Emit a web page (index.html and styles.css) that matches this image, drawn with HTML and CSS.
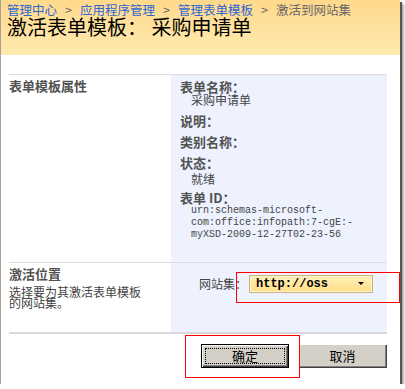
FILE: index.html
```html
<!doctype html>
<html>
<head>
<meta charset="utf-8">
<title>激活表单模板</title>
<link rel="stylesheet" href="styles.css">
</head>

<body>
<div class="page">
	<div class="header">
		<div class="crumbs">
			<a href="#">管理中心</a><span class="sep">&gt;</span><a href="#">应用程序管理</a><span class="sep">&gt;</span><a href="#">管理表单模板</a><span class="sep">&gt;</span><span class="cur">激活到网站集</span>
		</div>
		<h1>激活表单模板： 采购申请单</h1>
	</div>

	<div class="form">
		<div class="section">
			<div class="info">
				<h3>表单模板属性</h3>
			</div>
			<div class="body props">
				<div class="prop">
					<div class="label">表单名称：</div>
					<div class="value">采购申请单</div>
				</div>
				<div class="prop">
					<div class="label">说明：</div>
				</div>
				<div class="prop">
					<div class="label">类别名称：</div>
				</div>
				<div class="prop state">
					<div class="label">状态：</div>
					<div class="value">就绪</div>
				</div>
				<div class="prop">
					<div class="label">表单 ID：</div>
					<div class="value urn">urn:schemas-microsoft-<br>com:office:infopath:7-cgE:-<br>myXSD-2009-12-27T02-23-56</div>
				</div>
			</div>
		</div>

		<div class="section">
			<div class="info">
				<h3>激活位置</h3>
				<p>选择要为其激活表单模板的网站集。</p>
			</div>
			<div class="body site">
				<span class="site-label">网站集：</span>
				<div class="site-select">http://oss<i class="arrow"></i></div>
			</div>
		</div>

		<div class="buttons">
			<button class="btn default"><span>确定</span></button>
			<button class="btn"><span>取消</span></button>
		</div>
	</div>

	<div class="mark mark-select"></div>
	<div class="mark mark-ok"></div>
</div>
</body>
</html>
```

FILE: styles.css
```css
*{ margin:0; padding:0; box-sizing:border-box; }
body{ background:#fff; font-family:"Noto Sans CJK SC", "Liberation Sans", sans-serif; font-size:12px; color:#444; }
.page{ position:relative; width:400px; height:384px; background:#fff; border-left:1px solid #a8a098; box-shadow:2px 2px 0 #555, 4px 4px 2px #aaa; }

.header{ height:55px; padding:3px 0 0 6px; background:linear-gradient(#ffd98c, #ffeab0); }
.crumbs{ font-size:12.5px; line-height:14px; color:#666; white-space:nowrap; }
.crumbs a{ color:#2f66d0; text-decoration:none; }
.crumbs .sep{ padding:0 8px; }
.crumbs .cur{ color:#666; }
h1{ margin-top:-1px; font-size:20px; line-height:22px; font-weight:normal; color:#000; white-space:nowrap; }

.form{ margin:19px 0 0 8px; width:378px; }
.section{ display:flex; border-top:1px solid #dcdcdc; }
.info{ width:162px; padding-top:4px; }
.info h3{ font-size:13px; line-height:13px; font-weight:bold; color:#525252; }
.info p{ width:138px; margin-top:6px; font-size:12px; line-height:11px; color:#444; }
.body{ flex:1; background:#eef2ff; }

.props{ height:187px; padding:5px 0 0 9px; }
.prop{ margin-bottom:8px; }
.prop.state{ margin-top:1px; margin-bottom:6px; }
.label{ font-size:13px; line-height:13px; font-weight:bold; color:#525252; }
.value{ padding-left:11px; font-size:12px; line-height:13px; color:#444; }
.state .value{ margin-top:3px; }
.value.urn{ margin-top:1px; font-family:"Liberation Mono", monospace; font-size:10px; line-height:12px; color:#444; }

.site{ display:flex; align-items:center; height:69px; padding:0 0 28px 28px; }
.site-label{ width:50px; font-size:12px; color:#444; }
.site-select{ position:relative; width:124px; height:18px; padding-left:6px; border:1px solid #cbb27e; box-shadow:inset 0 0 0 1px #fff3cc; background:linear-gradient(#ffefb8, #ffdf88); font-family:"Liberation Mono", monospace; font-size:12px; font-weight:bold; line-height:16px; color:#000; }
.arrow{ position:absolute; right:8px; top:6px; border-left:3px solid transparent; border-right:3px solid transparent; border-top:3px solid #000; }

.buttons{ display:flex; justify-content:flex-end; gap:9px; padding-top:10px; border-top:2px solid #d9d9d9; }
.btn{ width:89px; height:24px; border:0; background:#d4d0c8; box-shadow:inset 1px 1px #fff, inset -1px -1px #404040, inset -2px -2px #808080; font-family:"Noto Sans CJK SC", sans-serif; font-size:13px; color:#000; }
.btn span{ display:block; line-height:22px; }
.btn.default{ width:88px; border:1px solid #000; box-shadow:inset 1px 1px #fff, inset -1px -1px #404040, inset -2px -2px #808080; }
.btn.default span{ margin:2px 3px; border:1px dotted #000; line-height:14px; height:16px; }

.mark{ position:absolute; border:1px solid #f00; }
.mark-select{ left:235px; top:272px; width:164px; height:31px; }
.mark-ok{ left:184px; top:335px; width:115px; height:43px; }
```
